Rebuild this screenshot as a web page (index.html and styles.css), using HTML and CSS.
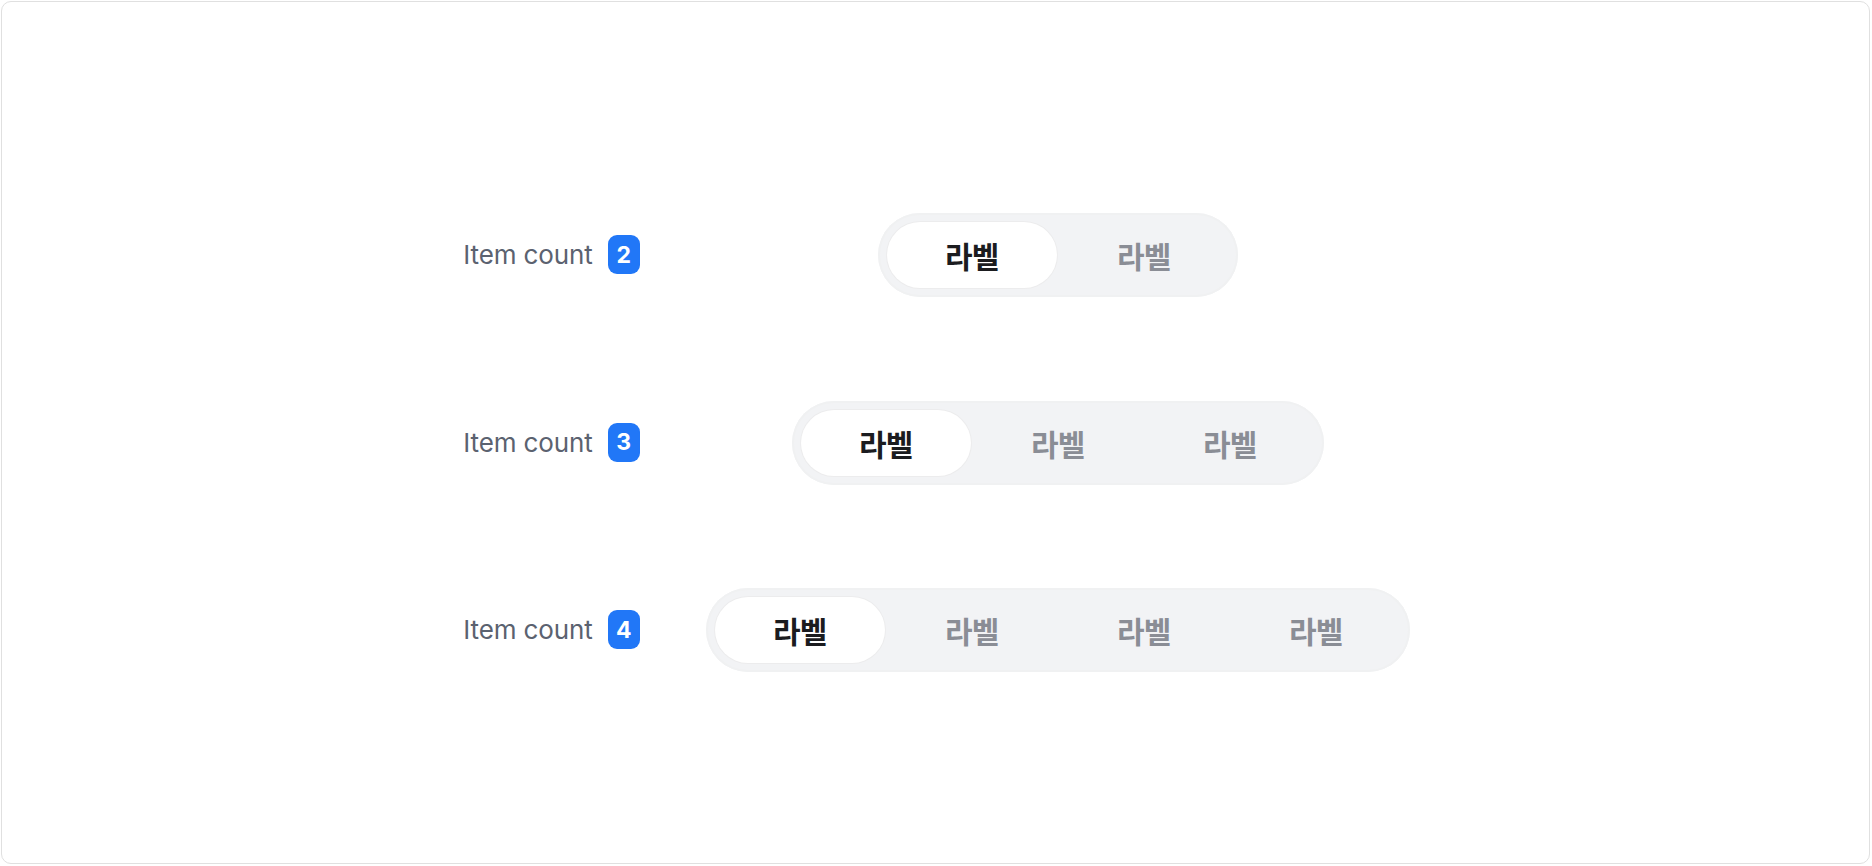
FILE: index.html
```html
<!DOCTYPE html>
<html lang="ko">
<head>
<meta charset="utf-8">
<title>Segmented control</title>
<link rel="stylesheet" href="styles.css">
</head>
<body>
<div class="frame">
  <div class="grid">
    <div class="label"><span class="label-text">Item count</span><span class="badge">2</span></div>
    <div class="seg">
      <div class="seg-item active">라벨</div>
      <div class="seg-item">라벨</div>
    </div>

    <div class="label"><span class="label-text">Item count</span><span class="badge">3</span></div>
    <div class="seg">
      <div class="seg-item active">라벨</div>
      <div class="seg-item">라벨</div>
      <div class="seg-item">라벨</div>
    </div>

    <div class="label"><span class="label-text">Item count</span><span class="badge">4</span></div>
    <div class="seg">
      <div class="seg-item active">라벨</div>
      <div class="seg-item">라벨</div>
      <div class="seg-item">라벨</div>
      <div class="seg-item">라벨</div>
    </div>
  </div>
</div>
</body>
</html>
```

FILE: styles.css
```css
* { box-sizing: border-box; }
html, body { margin: 0; padding: 0; background: #ffffff; }
body {
  font-family: Inter, "Noto Sans CJK KR", "Noto Sans", sans-serif;
}
.frame {
  margin: 1px 2px 2px 1px;
  height: 863px;
  border: 1px solid #e0e0e0;
  border-radius: 10px;
  background: #ffffff;
  padding-top: 211px;
}
.grid {
  display: grid;
  grid-template-columns: auto auto;
  justify-content: center;
  justify-items: center;
  align-items: center;
  column-gap: 66px;
  row-gap: 103.5px;
}
.label {
  justify-self: start;
  display: flex;
  align-items: center;
  gap: 15px;
  padding-left: 2px;
  padding-bottom: 1px;
}
.label-text {
  font-family: Inter, sans-serif;
  font-size: 26px;
  color: #5b6270;
  letter-spacing: -0.1px;
}
.badge {
  display: flex;
  align-items: center;
  justify-content: center;
  width: 32px;
  height: 39px;
  border-radius: 9px;
  background: #2177f7;
  color: #ffffff;
  font-family: Inter, sans-serif;
  font-weight: 700;
  font-size: 23px;
}
.seg {
  display: flex;
  gap: 2px;
  padding: 9px;
  height: 84px;
  border-radius: 42px;
  background: #f2f3f5;
  box-shadow: inset 0 0 0 2px #f0f1f2;
}
.seg-item {
  width: 170px;
  height: 66px;
  border-radius: 33px;
  display: flex;
  align-items: center;
  justify-content: center;
  font-family: "Noto Sans CJK KR", sans-serif;
  font-weight: 700;
  font-size: 30px;
  letter-spacing: -0.8px;
  color: #8a8d95;
}
.seg-item.active {
  background: #ffffff;
  color: #1b1c1f;
  box-shadow: 0 0 0 1px #ececed;
}
```
